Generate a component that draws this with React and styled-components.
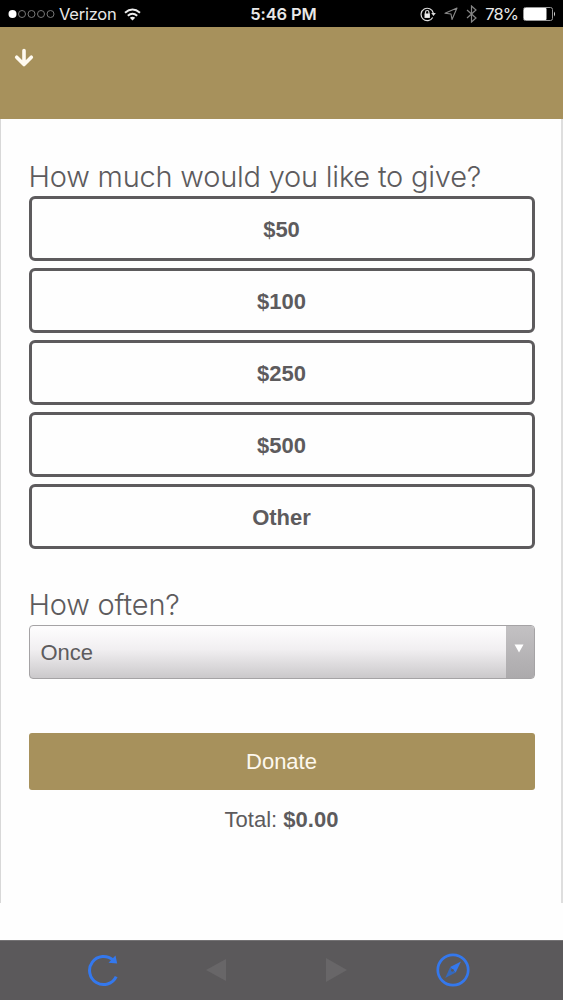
import React from "react";
import styled, { createGlobalStyle } from "styled-components";

const gold = "#a7915c";
const ink = "#5d5b5d";

const GlobalStyle = createGlobalStyle`
  *, *::before, *::after { box-sizing: border-box; }
  body { margin: 0; background: #fefefe; }
  button { font: inherit; margin: 0; padding: 0; cursor: pointer; }
  svg { display: block; flex: none; }
`;

const Screen = styled.div`
  display: flex;
  flex-direction: column;
  width: 563px;
  height: 1000px;
  overflow: hidden;
  background: #fefefe;
  color: ${ink};
  font-family: "Liberation Sans", Arial, sans-serif;
`;

const StatusBar = styled.div`
  flex: none;
  display: grid;
  grid-template-columns: 1fr auto 1fr;
  align-items: center;
  height: 27px;
  padding: 1px 7px 0 8px;
  background: #000;
  color: #e8e8e8;
  font: 400 17px/26px Inter, sans-serif;
`;

const StatusGroup = styled.div`
  display: flex;
  align-items: center;
  justify-content: ${(p) => (p.$end ? "flex-end" : "flex-start")};
`;

const Carrier = styled.span`
  margin: 0 8px 0 4px;
  font-size: 16.5px;
  letter-spacing: -0.25px;
`;

const Clock = styled.span`
  padding-left: 3px;
  font-size: 16.5px;
  font-weight: 600;
  letter-spacing: -0.1px;
`;

const Percent = styled.span`
  margin: 0 5px 0 8px;
  font-size: 16.5px;
  letter-spacing: -0.9px;
`;

const StatusIcons = styled.div`
  display: flex;
  align-items: center;
  gap: 8px;
`;

const Header = styled.header`
  flex: none;
  height: 92px;
  padding: 21px 14px;
  background: ${gold};
`;

const Form = styled.main`
  flex: none;
  display: flex;
  flex-direction: column;
  height: 784px;
  padding: 40px 26.5px 0 27.5px;
  border: solid #dedede;
  border-width: 0 2px 0 1px;
  border-left-color: #d8d8d8;
`;

const Question = styled.h2`
  margin: 0;
  height: 37px;
  white-space: nowrap;
  font: 300 29px/35px Inter, sans-serif;
  letter-spacing: -0.22px;
`;

const Options = styled.div`
  display: flex;
  flex-direction: column;
  gap: 7px;
  margin: 0 0 38px;
`;

const Option = styled.button`
  width: 506px;
  height: 65px;
  padding-top: 2px;
  border: 3px solid ${ink};
  border-radius: 6px;
  background: #fefefe;
  color: ${ink};
  font-size: 22px;
  font-weight: 700;
  line-height: 57px;
`;

const Select = styled.button`
  flex: none;
  display: flex;
  width: 506px;
  height: 54px;
  margin-top: 1px;
  border: 1px solid #a5a3a5;
  border-radius: 4px;
  overflow: hidden;
  background: linear-gradient(#fdfcfd 5%, #f1eff1 45%, #cbc9cb);
  color: ${ink};
  text-align: left;
`;

const SelectValue = styled.span`
  flex: 1;
  padding-left: 11px;
  font-size: 22px;
  line-height: 53px;
`;

const SelectArrow = styled.span`
  display: flex;
  justify-content: center;
  width: 28px;
  height: 52px;
  padding: 18px 2px 0 0;
  background: linear-gradient(#c3c1c3, #acaaac);
`;

const Donate = styled.button`
  flex: none;
  width: 506px;
  height: 57px;
  margin-top: 54px;
  border: 0;
  border-radius: 3px;
  background: ${gold};
  color: #fdf8ee;
  font-size: 22px;
  line-height: 58px;
`;

const Total = styled.p`
  margin: 16px 0 0;
  text-align: center;
  font-size: 22px;
  line-height: 28px;
`;

const Toolbar = styled.nav`
  display: grid;
  grid-template-columns: 87px 118px 120px 111px 1fr;
  align-items: center;
  height: 60px;
  margin-top: auto;
  padding-bottom: 2px;
  border-top: 1px solid #747274;
  background: #5b595b;
`;

const ToolButton = styled.button`
  display: flex;
  grid-column: ${(p) => p.$column};
  border: 0;
  background: none;
`;

const Signal = () => (
  <svg width="47" height="10" viewBox="0 0 47 10">
    <circle cx="4.5" cy="5" r="4" fill="#fff" />
    {[14, 23.5, 33, 42.5].map((x) => (
      <circle key={x} cx={x} cy="5" r="3.5" fill="none" stroke="#777" />
    ))}
  </svg>
);

const Wifi = () => (
  <svg width="17" height="13" viewBox="0 0 17 13" fill="none" stroke="#eee" strokeWidth="2">
    <path d="M1 4.7Q8.5-1.7 16 4.7M3.8 7.7Q8.5 3.7 13.2 7.7" />
    <path d="M5.8 9.8Q8.5 7.5 11.2 9.8L8.5 12.5Z" fill="#eee" stroke="none" />
  </svg>
);

const RotationLock = () => (
  <svg width="16" height="15" viewBox="0 0 16 15" fill="none" stroke="#ddd" strokeWidth="1.2">
    <path d="M12.7 10.5A6.2 6.2 0 1 1 13.3 6" />
    <path d="M11.2 6H15.8L13.5 9Z" fill="#ddd" stroke="none" />
    <rect x="4.5" y="6.5" width="5.4" height="4.4" fill="#eee" stroke="none" />
    <path d="M5.5 7V5.2a1.7 1.7 0 0 1 3.4 0V7" />
  </svg>
);

const Location = () => (
  <svg width="14" height="14" viewBox="0 0 14 14" fill="none" stroke="#8a8a8a" strokeWidth="1.1">
    <path d="M13 1L8 12.5L7 7L1 6.3Z" strokeLinejoin="round" />
  </svg>
);

const Bluetooth = () => (
  <svg width="11" height="18" viewBox="0 0 11 18" fill="none" stroke="#858585" strokeWidth="1.2">
    <path d="M1 5L10 13L5.5 17V1L10 5L1 13" />
  </svg>
);

const Battery = () => (
  <svg width="33" height="14" viewBox="0 0 33 14">
    <rect x=".5" y=".5" width="29" height="13" rx="2" fill="none" stroke="#999" />
    <rect x="1" y="1" width="22.5" height="12" rx="1" fill="#fff" />
    <path d="M31 4.5Q33 7 31 9.5Z" fill="#ddd" />
  </svg>
);

const DownArrow = () => (
  <svg
    width="20"
    height="20"
    viewBox="0 0 20 20"
    fill="none"
    stroke="#fffaf0"
    strokeWidth="3.6"
    strokeLinecap="round"
    strokeLinejoin="round"
  >
    <path d="M10 2.5V16M2.7 9.2L10 16.5L17.3 9.2" />
  </svg>
);

const Reload = () => (
  <svg width="32" height="34" viewBox="0 0 32 34" fill="none" stroke="#3478ed" strokeWidth="3">
    <path d="M29.2 23.6A14 14 0 1 1 26 7.2" />
    <path d="M28.5 2.5L30.2 10.5L21.5 9.8Z" fill="#3478ed" stroke="none" />
  </svg>
);

const Triangle = ({ d }) => (
  <svg width="22" height="26" viewBox="0 0 22 26">
    <path d={d} fill="#686668" />
  </svg>
);

const Compass = () => (
  <svg width="34" height="34" viewBox="0 0 34 34">
    <circle cx="17" cy="17" r="15.2" fill="none" stroke="#3478ed" strokeWidth="2.7" />
    <path d="M25 8.5L19.7 19.5L14.2 14Z" fill="#3478ed" />
    <path d="M9.2 25L14.2 14L19.7 19.5Z" fill="#3569bd" />
    <circle cx="16.4" cy="17.3" r="1.4" fill="#5b595b" />
  </svg>
);

export default function App() {
  return (
    <Screen>
      <GlobalStyle />
      <StatusBar>
        <StatusGroup>
          <Signal />
          <Carrier>Verizon</Carrier>
          <Wifi />
        </StatusGroup>
        <Clock>5:46 PM</Clock>
        <StatusGroup $end>
          <StatusIcons>
            <RotationLock />
            <Location />
            <Bluetooth />
          </StatusIcons>
          <Percent>78%</Percent>
          <Battery />
        </StatusGroup>
      </StatusBar>
      <Header>
        <DownArrow />
      </Header>
      <Form>
        <Question>How much would you like to give?</Question>
        <Options>
          {["$50", "$100", "$250", "$500", "Other"].map((label) => (
            <Option key={label}>{label}</Option>
          ))}
        </Options>
        <Question>How often?</Question>
        <Select>
          <SelectValue>Once</SelectValue>
          <SelectArrow>
            <svg width="10" height="9" viewBox="0 0 10 9">
              <path d="M.5 .5H9.5L5 8.5Z" fill="#fff" />
            </svg>
          </SelectArrow>
        </Select>
        <Donate>Donate</Donate>
        <Total>
          Total: <b>$0.00</b>
        </Total>
      </Form>
      <Toolbar>
        <ToolButton $column={2} aria-label="Reload">
          <Reload />
        </ToolButton>
        <ToolButton $column={3} aria-label="Back">
          <Triangle d="M1 13L21 2V24Z" />
        </ToolButton>
        <ToolButton $column={4} aria-label="Forward">
          <Triangle d="M22 13L1 1V25Z" />
        </ToolButton>
        <ToolButton $column={5} aria-label="Open in browser">
          <Compass />
        </ToolButton>
      </Toolbar>
    </Screen>
  );
}
